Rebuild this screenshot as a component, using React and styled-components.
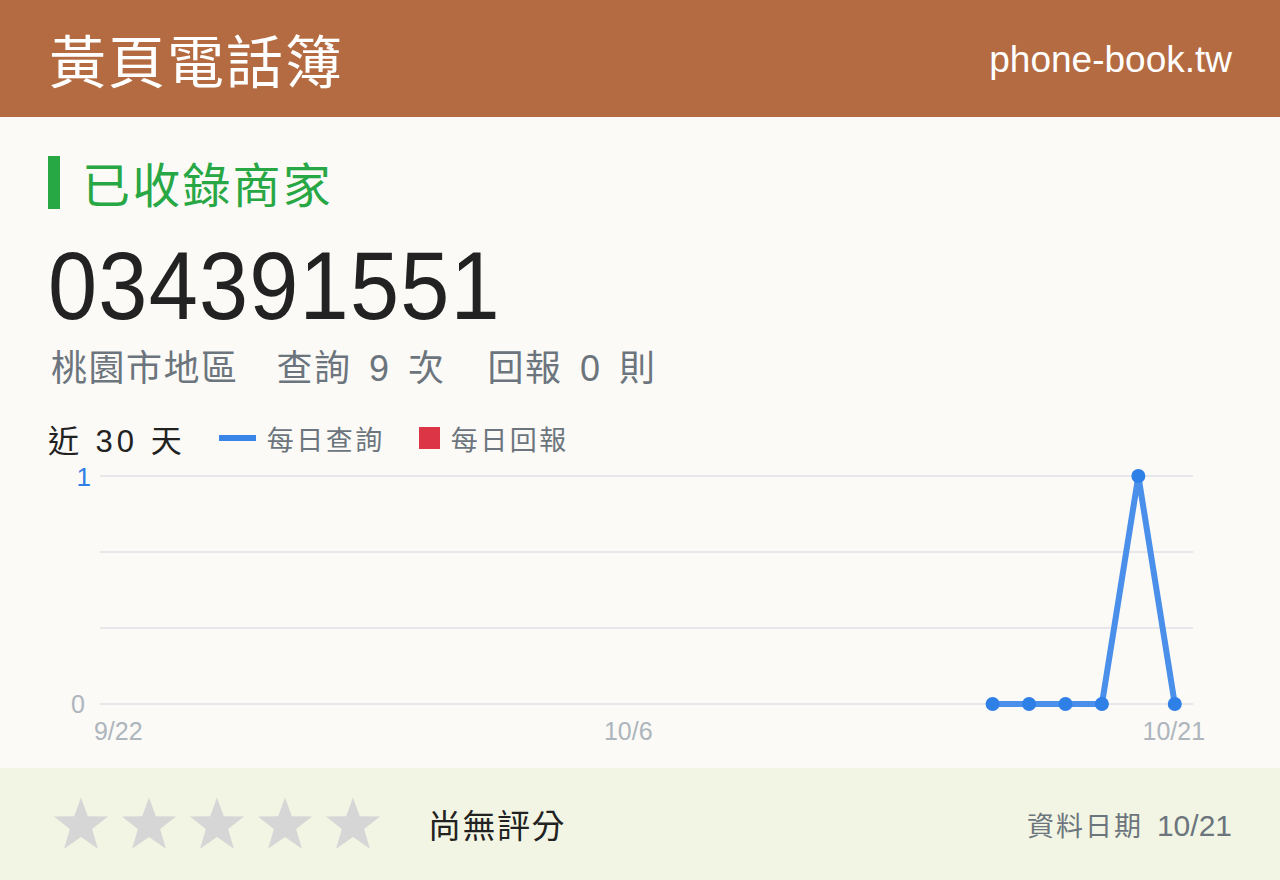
import React from "react";
import styled, { createGlobalStyle } from "styled-components";

const GlobalStyle = createGlobalStyle`
  html, body { margin: 0; padding: 0; background: #fbfaf6; }
  body { font-family: "Liberation Sans", "Noto Sans CJK TC", sans-serif; }
  * { box-sizing: border-box; }
`;

const Page = styled.div`
  width: 1280px;
  height: 880px;
  display: flex;
  flex-direction: column;
  background: #fbfaf6;
`;

const Header = styled.header`
  height: 117px;
  flex: none;
  background: #b46b41;
  display: flex;
  align-items: center;
  justify-content: space-between;
  padding: 0 48px 0 49px;
  color: #fff;
`;

const Title = styled.h1`
  margin: 0;
  font-family: "Noto Sans CJK TC", sans-serif;
  font-weight: 400;
  font-size: 57px;
  line-height: 1;
  letter-spacing: 2px;
`;

const Domain = styled.div`
  font-family: "Liberation Sans", sans-serif;
  font-size: 37px;
  line-height: 1;
  margin-top: 2px;
`;

const Main = styled.main`
  flex: 1;
  padding: 39px 48px 0 48px;
  display: flex;
  flex-direction: column;
`;

const Heading = styled.div`
  display: flex;
  align-items: center;
  gap: 22px;
  height: 53px;
`;

const Bar = styled.span`
  width: 12px;
  height: 53px;
  background: #28a745;
`;

const HeadingText = styled.h2`
  margin: 0;
  font-family: "Noto Sans CJK TC", sans-serif;
  font-weight: 400;
  font-size: 48px;
  line-height: 53px;
  color: #28a745;
  letter-spacing: 2.2px;
`;

const Phone = styled.div`
  align-self: flex-start;
  margin-top: 27px;
  font-family: "Liberation Sans", sans-serif;
  font-size: 96px;
  line-height: 100px;
  letter-spacing: 1.3px;
  color: #222;
  transform: scaleX(0.92);
  transform-origin: left center;
`;

const Meta = styled.div`
  margin-top: 13px;
  padding-left: 3px;
  display: flex;
  font-size: 36px;
  line-height: 40px;
  letter-spacing: 1.5px;
  word-spacing: 6px;
  color: #6c757d;
`;

const MetaItem = styled.span`
  margin-left: ${(p) => p.$gap || 0}px;
  white-space: pre;
`;

const LegendRow = styled.div`
  margin-top: 29px;
  display: flex;
  align-items: center;
  height: 40px;
`;

const Period = styled.span`
  font-size: 31px;
  letter-spacing: 4px;
  color: #222;
  white-space: pre;
  margin-right: 33px;
`;

const LegendItem = styled.span`
  display: flex;
  align-items: center;
  gap: 11px;
  font-size: 27px;
  letter-spacing: 2.5px;
  color: #6c757d;
  margin-right: 34px;
`;

const Swatch = styled.span`
  display: inline-block;
  width: ${(p) => (p.$line ? 37 : 21)}px;
  height: ${(p) => (p.$line ? 6 : 22)}px;
  background: ${(p) => p.$color};
`;

const ChartWrap = styled.div`
  width: 1184px;
  height: 300px;
`;

const Footer = styled.footer`
  height: 112px;
  flex: none;
  background: #f2f5e3;
  display: flex;
  align-items: center;
  padding: 0 48px 0 52px;
`;

const Stars = styled.div`
  display: flex;
  gap: 10px;
`;

const NoRating = styled.span`
  margin-left: 46px;
  font-size: 33px;
  color: #222;
  letter-spacing: 1.5px;
`;

const DateInfo = styled.div`
  margin-left: auto;
  display: flex;
  align-items: baseline;
  gap: 14px;
  color: #6c757d;
`;

const DateLabel = styled.span`
  font-size: 27px;
  letter-spacing: 2px;
`;

const DateValue = styled.span`
  font-family: "Liberation Sans", sans-serif;
  font-size: 30px;
`;

const Star = () => (
  <svg width="58" height="56" viewBox="0 0 24 23">
    <path
      d="M12 0.5 L14.8 8.3 L23.2 8.4 L16.6 13.6 L19 21.7 L12 16.9 L5 21.7 L7.4 13.6 L0.8 8.4 L9.2 8.3 Z"
      fill="#d6d6d6"
    />
  </svg>
);

const data = Array.from({ length: 30 }, (_, i) => {
  if (i < 24) return null;
  return i === 28 ? 1 : 0;
});

const Chart = () => {
  const x0 = 52;
  const x1 = 1145;
  const yTop = 18;
  const yBot = 246;
  const step = (x1 - x0) / 30;
  const cx = (i) => x0 + step * (i + 0.5);
  const cy = (v) => yBot - (yBot - yTop) * v;
  const pts = data
    .map((v, i) => (v === null ? null : [cx(i), cy(v)]))
    .filter(Boolean);
  const grid = [0, 1, 2, 3].map((k) => yTop + k * ((yBot - yTop) / 3));
  const font = "Liberation Sans, sans-serif";
  return (
    <svg width="1184" height="300" viewBox="0 0 1184 300">
      {grid.map((y) => (
        <line key={y} x1={x0} x2={x1} y1={y} y2={y} stroke="#e6e8ec" strokeWidth="2" />
      ))}
      <text x="43" y={yTop + 10} textAnchor="end" fontSize="26" fill="#2e7fe6" fontFamily={font}>1</text>
      <text x="37" y={yBot + 9} textAnchor="end" fontSize="25" fill="#adb5bd" fontFamily={font}>0</text>
      <text x={cx(0)} y={yBot + 36} textAnchor="middle" fontSize="25" fill="#adb5bd" fontFamily={font}>9/22</text>
      <text x={cx(14)} y={yBot + 36} textAnchor="middle" fontSize="25" fill="#adb5bd" fontFamily={font}>10/6</text>
      <text x={cx(29) - 1} y={yBot + 36} textAnchor="middle" fontSize="25" fill="#adb5bd" fontFamily={font}>10/21</text>
      <polyline
        points={pts.map((p) => p.join(",")).join(" ")}
        fill="none"
        stroke="#4a8fea"
        strokeWidth="6"
        strokeLinejoin="round"
      />
      {pts.map(([x, y]) => (
        <circle key={x} cx={x} cy={y} r="7" fill="#2e7fe6" />
      ))}
    </svg>
  );
};

export default function App() {
  return (
    <Page>
      <GlobalStyle />
      <Header>
        <Title>黃頁電話簿</Title>
        <Domain>phone-book.tw</Domain>
      </Header>
      <Main>
        <Heading>
          <Bar />
          <HeadingText>已收錄商家</HeadingText>
        </Heading>
        <Phone>034391551</Phone>
        <Meta>
          <MetaItem>桃園市地區</MetaItem>
          <MetaItem $gap={38}>查詢 9 次</MetaItem>
          <MetaItem $gap={42}>回報 0 則</MetaItem>
        </Meta>
        <LegendRow>
          <Period>近 30 天</Period>
          <LegendItem>
            <Swatch $line $color="#3a86e8" />
            每日查詢
          </LegendItem>
          <LegendItem>
            <Swatch $color="#dc3545" />
            每日回報
          </LegendItem>
        </LegendRow>
        <ChartWrap>
          <Chart />
        </ChartWrap>
      </Main>
      <Footer>
        <Stars>
          <Star />
          <Star />
          <Star />
          <Star />
          <Star />
        </Stars>
        <NoRating>尚無評分</NoRating>
        <DateInfo>
          <DateLabel>資料日期</DateLabel>
          <DateValue>10/21</DateValue>
        </DateInfo>
      </Footer>
    </Page>
  );
}
